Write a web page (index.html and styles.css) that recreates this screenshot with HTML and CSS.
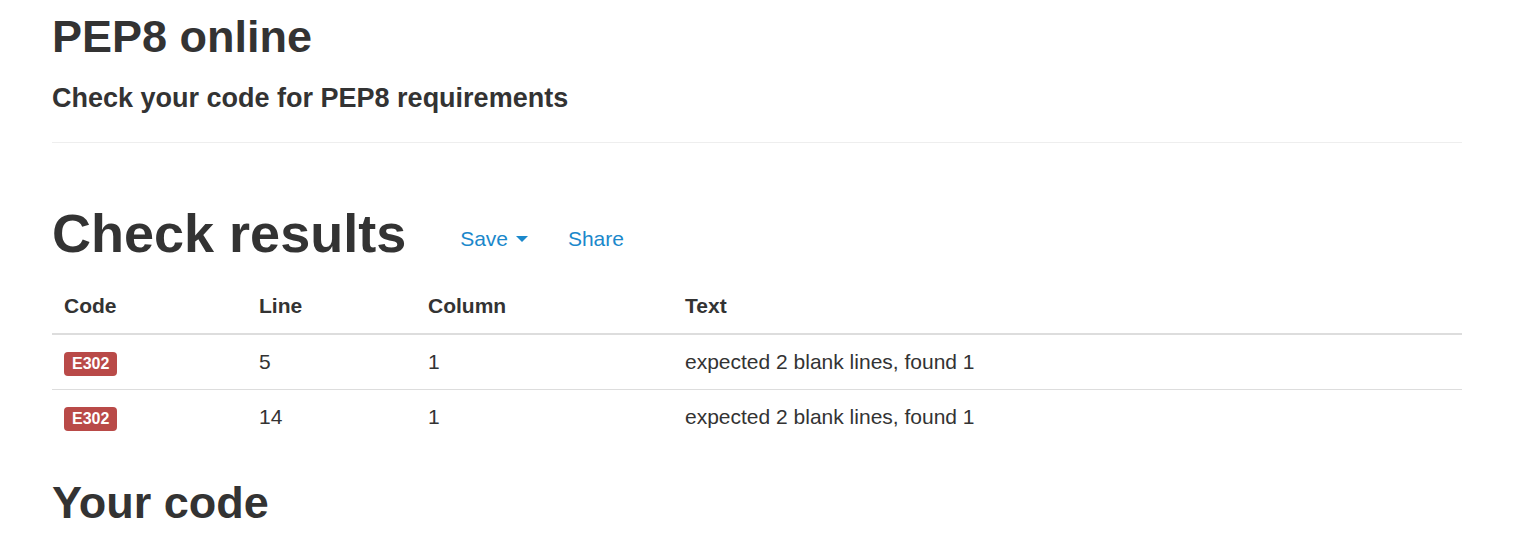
FILE: index.html
```html
<!DOCTYPE html>
<html lang="en">
<head>
<meta charset="utf-8">
<title>PEP8 online</title>
<link rel="stylesheet" href="styles.css">
</head>
<body>
<div class="container">
  <header class="page-header">
    <h2 class="site-title">PEP8 online</h2>
    <h4 class="site-sub">Check your code for PEP8 requirements</h4>
  </header>
  <hr class="divider">

  <div class="results-head">
    <h1 class="results-title">Check results</h1>
    <ul class="actions">
      <li><a class="action" href="#">Save <span class="caret"></span></a></li>
      <li><a class="action" href="#">Share</a></li>
    </ul>
  </div>

  <table class="results">
    <colgroup>
      <col class="c-code">
      <col class="c-line">
      <col class="c-col">
      <col class="c-text">
    </colgroup>
    <thead>
      <tr><th>Code</th><th>Line</th><th>Column</th><th>Text</th></tr>
    </thead>
    <tbody>
      <tr><td><span class="label">E302</span></td><td>5</td><td>1</td><td>expected 2 blank lines, found 1</td></tr>
      <tr><td><span class="label">E302</span></td><td>14</td><td>1</td><td>expected 2 blank lines, found 1</td></tr>
    </tbody>
  </table>

  <h2 class="code-title">Your code</h2>
</div>
</body>
</html>
```

FILE: styles.css
```css
html, body {
  margin: 0;
  padding: 0;
  background: #fff;
}
body {
  font-family: "Liberation Sans", Arial, Helvetica, sans-serif;
  font-size: 21px;
  line-height: 30px;
  color: #333;
  overflow: hidden;
}
.container {
  width: 1410px;
  margin-left: 52px;
}
.page-header {
  padding-top: 12px;
}
.site-title {
  font-size: 45px;
  line-height: 49.5px;
  font-weight: bold;
  margin: 0 0 22px;
}
.site-sub {
  font-size: 27px;
  line-height: 29.7px;
  font-weight: bold;
  margin: 0;
}
.divider {
  border: 0;
  border-top: 1.5px solid #eee;
  margin: 29px 0 0;
  height: 0;
}
.results-head {
  display: flex;
  align-items: flex-start;
  margin-top: 61px;
}
.results-title {
  font-size: 54px;
  line-height: 59.4px;
  font-weight: bold;
  margin: 0;
}
.actions {
  list-style: none;
  display: flex;
  gap: 2px;
  margin: 20px 0 0 35px;
  padding: 0;
}
.action {
  display: block;
  padding: 0 19px;
  color: #1b88cb;
  text-decoration: none;
  line-height: 30px;
}
.caret {
  display: inline-block;
  width: 0;
  height: 0;
  margin-left: 2px;
  vertical-align: middle;
  border-top: 6px solid #1b88cb;
  border-left: 6px solid transparent;
  border-right: 6px solid transparent;
  position: relative;
  top: -2px;
}
.results {
  width: 100%;
  border-collapse: collapse;
  border-spacing: 0;
  margin-top: 15px;
}
.c-code { width: 195px; }
.c-line { width: 169px; }
.c-col { width: 257px; }
.results th {
  text-align: left;
  font-weight: bold;
  padding: 12px;
  line-height: 30px;
  border-bottom: 2px solid #ddd;
}
.results td {
  padding: 12px;
  line-height: 30px;
  border-top: 1px solid #ddd;
  vertical-align: top;
}
.label {
  display: inline;
  font-size: 16px;
  font-weight: bold;
  line-height: 1;
  color: #fff;
  background: #b94a48;
  padding: 3px 8px 4.5px;
  border-radius: 4px;
}
.code-title {
  font-size: 45px;
  line-height: 49.5px;
  font-weight: bold;
  margin: 34px 0 0;
}
```
